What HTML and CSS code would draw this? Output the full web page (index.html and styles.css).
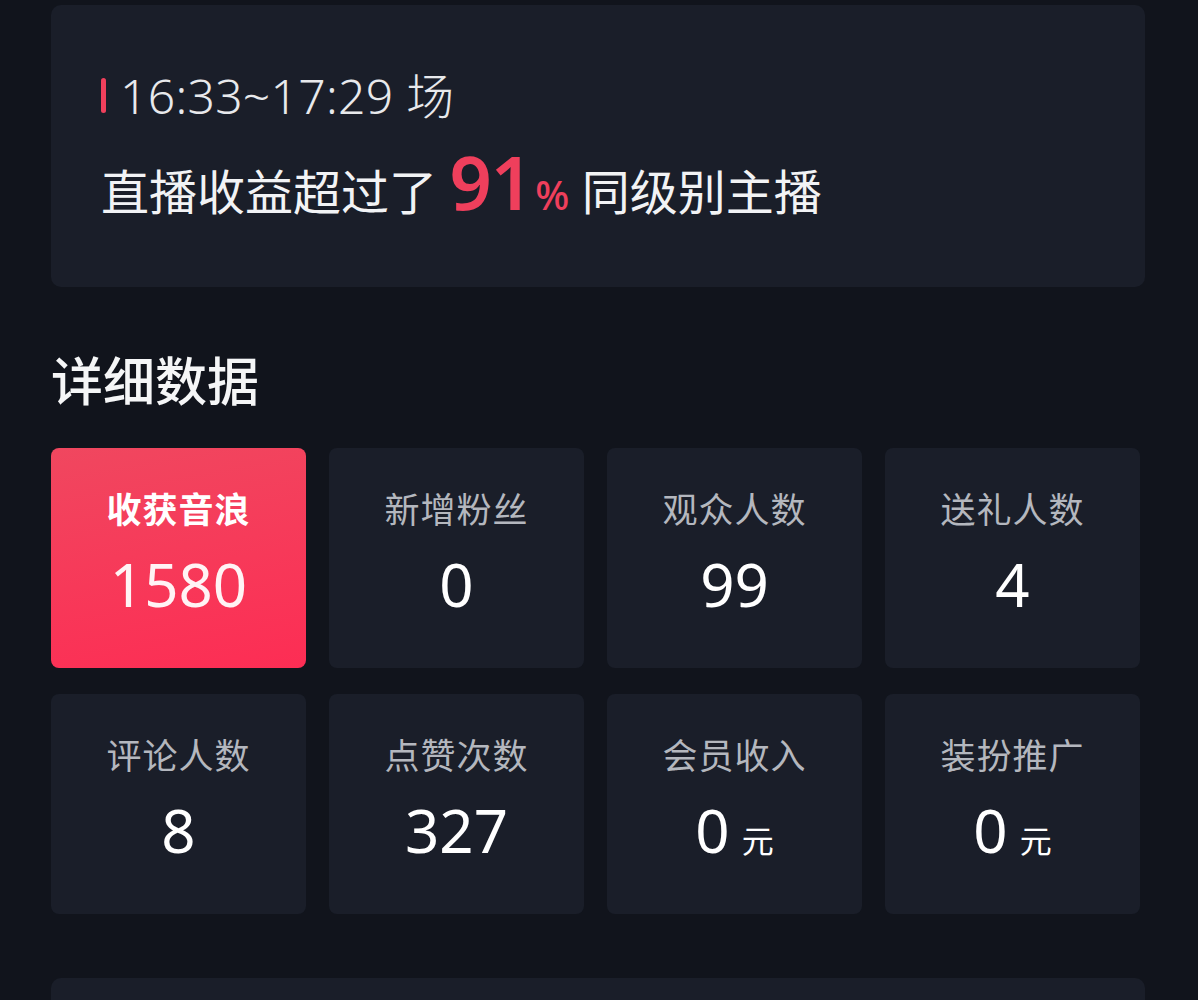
FILE: index.html
```html
<!DOCTYPE html>
<html lang="zh-CN">
<head>
<meta charset="utf-8">
<link rel="stylesheet" href="styles.css">
</head>
<body>
<div class="page">
  <section class="summary">
    <div class="session"><span class="bar"></span><span>16:33~17:29 场</span></div>
    <div class="rank">直播收益超过了 <span class="pct">91</span><span class="pct-sign">%</span> 同级别主播</div>
  </section>
  <h2 class="title">详细数据</h2>
  <div class="grid">
    <div class="card card-hot"><div class="label">收获音浪</div><div class="value">1580</div></div>
    <div class="card"><div class="label">新增粉丝</div><div class="value">0</div></div>
    <div class="card"><div class="label">观众人数</div><div class="value">99</div></div>
    <div class="card"><div class="label">送礼人数</div><div class="value">4</div></div>
    <div class="card"><div class="label">评论人数</div><div class="value">8</div></div>
    <div class="card"><div class="label">点赞次数</div><div class="value">327</div></div>
    <div class="card"><div class="label">会员收入</div><div class="value">0<span class="unit">元</span></div></div>
    <div class="card"><div class="label">装扮推广</div><div class="value">0<span class="unit">元</span></div></div>
  </div>
  <div class="next"></div>
</div>
</body>
</html>
```
FILE: styles.css
```css
html, body {
  margin: 0;
  padding: 0;
  background: #11141c;
  height: 1000px;
  overflow: hidden;
}
body {
  font-family: "Noto Sans", "Noto Sans CJK SC", sans-serif;
  color: #f2f3f5;
}
.page {
  padding: 5px 53px 0 51px;
  display: flex;
  flex-direction: column;
}
.summary {
  background: #1a1e29;
  border-radius: 10px;
  height: 282px;
  box-sizing: border-box;
  padding: 64px 50px 0 50px;
  display: flex;
  flex-direction: column;
}
.session {
  display: flex;
  align-items: center;
  height: 48px;
  font-size: 48px;
  font-weight: 300;
  color: #e8e9ec;
  letter-spacing: 0.3px;
}
.bar {
  width: 5px;
  height: 35px;
  border-radius: 3px;
  background: #f0405c;
  margin-right: 14px;
  margin-top: 4px;
}
.rank {
  margin-top: 28px;
  height: 74px;
  line-height: 74px;
  font-size: 48px;
  color: #f2f3f5;
  white-space: nowrap;
}
.pct {
  font-family: "Noto Sans", sans-serif;
  font-size: 74px;
  font-weight: 600;
  color: #ef3f5c;
  letter-spacing: -1px;
}
.pct-sign {
  font-size: 40px;
  font-weight: 500;
  color: #ef3f5c;
  margin-left: 3px;
}
.title {
  margin: 64px 0 37px 0;
  height: 60px;
  line-height: 60px;
  font-size: 52px;
  font-weight: 500;
  color: #f5f6f7;
}
.grid {
  display: grid;
  grid-template-columns: repeat(4, 255px);
  column-gap: 23px;
  row-gap: 26px;
}
.card {
  height: 220px;
  background: #1a1e29;
  border-radius: 8px;
  display: flex;
  flex-direction: column;
  align-items: center;
  box-sizing: border-box;
  padding-top: 42px;
}
.card-hot {
  background: linear-gradient(170deg, #f0475f 0%, #fd2d54 100%);
}
.label {
  height: 40px;
  line-height: 40px;
  font-size: 35px;
  color: #b4b7be;
  letter-spacing: 1px;
}
.card-hot .label {
  color: #ffffff;
  font-weight: 700;
}
.value {
  margin-top: 19px;
  height: 70px;
  line-height: 70px;
  font-size: 60px;
  font-weight: 400;
  color: #ffffff;
  display: flex;
  align-items: baseline;
}
.card-hot .value {
  color: #fff3f5;
}
.unit {
  font-size: 32px;
  margin-left: 12px;
  font-family: "Noto Sans CJK SC", sans-serif;
}
.next {
  margin-top: 64px;
  height: 60px;
  background: #1a1e29;
  border-radius: 10px;
}
```
